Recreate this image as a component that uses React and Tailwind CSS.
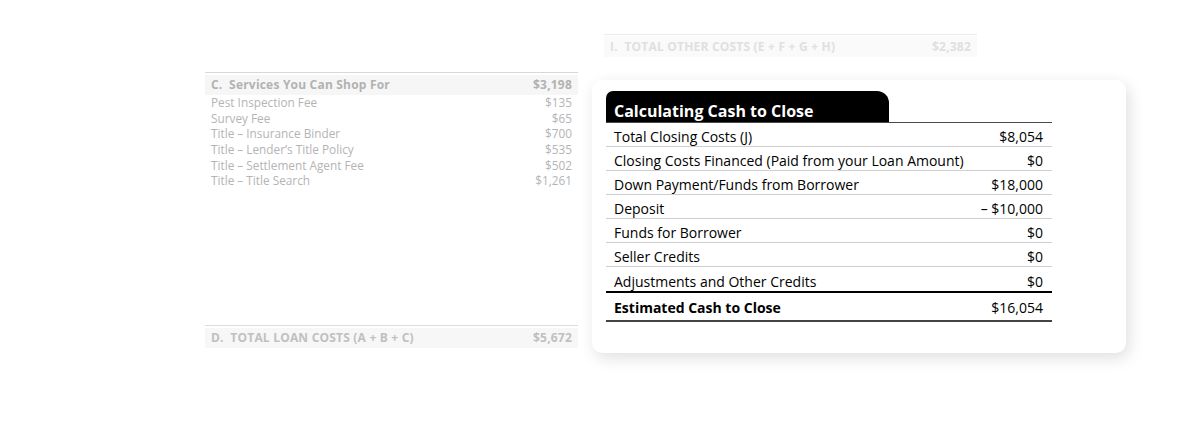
import React from "react";

const font = { fontFamily: '"Open Sans", "Noto Sans", sans-serif' };

const shop = [
  ["Pest Inspection Fee", "$135"],
  ["Survey Fee", "$65"],
  ["Title – Insurance Binder", "$700"],
  ["Title – Lender’s Title Policy", "$535"],
  ["Title – Settlement Agent Fee", "$502"],
  ["Title – Title Search", "$1,261"],
];

const rows = [
  ["Total Closing Costs (J)", "$8,054"],
  ["Closing Costs Financed (Paid from your Loan Amount)", "$0"],
  ["Down Payment/Funds from Borrower", "$18,000"],
  ["Deposit", "– $10,000"],
  ["Funds for Borrower", "$0"],
  ["Seller Credits", "$0"],
  ["Adjustments and Other Credits", "$0"],
];

export default function App() {
  return (
    <div className="w-[1183px] h-[429px] bg-white overflow-hidden flex" style={font}>
      {/* left faded column */}
      <div className="ml-[205px] w-[373px] pt-[72px] flex flex-col">
        <div className="border-t border-[#d8d8d8] pt-[2px]">
          <div className="h-[20px] bg-[#f6f6f6] flex items-center justify-between px-[6px] text-[12px] font-bold text-[#b2b2b2] tracking-[0.2px]">
            <span>C.&nbsp; Services You Can Shop For</span>
            <span>$3,198</span>
          </div>
          <div>
            {shop.map(([a, b]) => (
              <div key={a} className="h-[15.7px] flex items-center justify-between px-[6px] text-[11.8px] text-[#b4b4b4] leading-none">
                <span>{a}</span>
                <span>{b}</span>
              </div>
            ))}
          </div>
        </div>
        <div className="mt-[136px] border-t border-[#dcdcdc] pt-[2px]">
          <div className="h-[20px] bg-[#f7f7f7] flex items-center justify-between px-[6px] text-[12px] font-bold text-[#c0c0c0] tracking-[0.2px]">
            <span>D.&nbsp; TOTAL LOAN COSTS (A + B + C)</span>
            <span>$5,672</span>
          </div>
        </div>
      </div>

      {/* right column */}
      <div className="ml-[14px] flex flex-col">
        <div className="ml-[12px] w-[373px] mt-[34px] border-t border-[#ebebeb] pt-[1px]">
          <div className="h-[21px] bg-[#fafafa] flex items-center justify-between px-[6px] text-[12px] font-bold text-[#e0e0e0] tracking-[0.2px]">
            <span>I.&nbsp; TOTAL OTHER COSTS (E + F + G + H)</span>
            <span>$2,382</span>
          </div>
        </div>
        <div className="mt-[23px] w-[534px] h-[273px] bg-white rounded-[10px] shadow-[3px_5px_16px_rgba(0,0,0,0.13)] pl-[14px] pt-[11px]">
          <div className="w-[446px]">
            <div className="w-[283px] h-[31px] bg-black rounded-tl-[7px] rounded-tr-[12px] flex items-end pl-[8px] pb-[1px]">
              <span className="text-white font-bold text-[16px] leading-[20px]">Calculating Cash to Close</span>
            </div>
            <div className="border-t-[1.5px] border-[#4a4a4a]">
              {rows.map(([a, b], i) => (
                <div
                  key={a}
                  className={
                    "h-[24px] flex items-center justify-between pl-[8px] pr-[9px] pt-[4px] text-[14px] text-black " +
                    (i < rows.length - 1 ? "border-b border-[#cfcfcf]" : "")
                  }
                >
                  <span>{a}</span>
                  <span>{b}</span>
                </div>
              ))}
            </div>
            <div className="border-t-2 border-black h-[31px] flex items-center justify-between pl-[8px] pr-[9px] pt-[2px] text-[14px] text-black border-b-2 border-b-[#444]">
              <span className="font-bold">Estimated Cash to Close</span>
              <span>$16,054</span>
            </div>
          </div>
        </div>
      </div>
    </div>
  );
}
